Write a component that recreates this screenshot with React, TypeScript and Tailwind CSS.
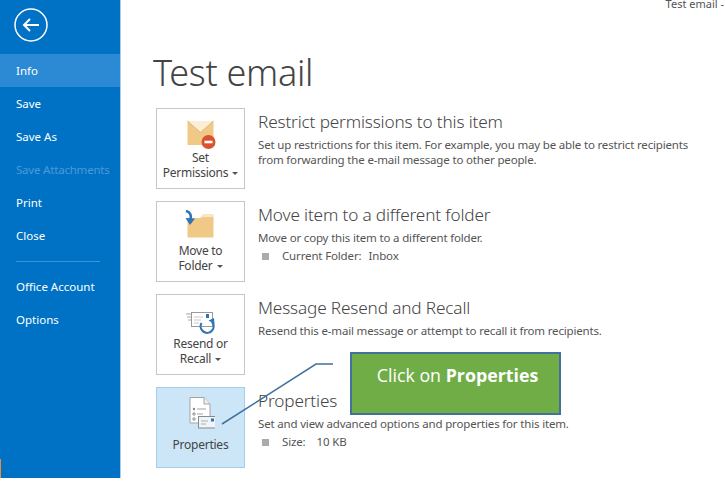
import React from "react";

const font = { fontFamily: '"Noto Sans", "Open Sans", sans-serif' };

function Caret() {
  return <span className="inline-block ml-[4px] mb-[2px] w-0 h-0 border-l-[3px] border-r-[3px] border-t-[3px] border-l-transparent border-r-transparent border-t-[#555]" />;
}

function EnvelopeIcon() {
  return (
    <svg width="32" height="30" viewBox="0 0 32 30">
      <path d="M2.500 2h26v24h-26z" fill="#f0c987" />
      <path d="M2.500 2l13 11.500L28.500 2z" fill="#fbeed6" />
      <path d="M2.500 2l13 11.500L28.500 2" fill="none" stroke="#dcae66" strokeWidth="0.8" />
      <circle cx="23.500" cy="23" r="7" fill="#d9532f" />
      <rect x="19.500" y="21.700" width="8" height="2.600" fill="#fff" />
    </svg>
  );
}

function FolderIcon() {
  return (
    <svg width="32" height="32" viewBox="0 0 32 32">
      <path d="M2.500 8H15L18 4.500H27.500a1 1 0 0 1 1 1V27.500H2.500z" fill="#f0c987" />
      <path d="M15 8L18 4.500H27.500a1 1 0 0 1 1 1V7H18L16 8z" fill="#f9e6c3" />
      <path d="M1 1C5 2 6.500 5 5.500 9" fill="none" stroke="#2f75b5" strokeWidth="2.600" />
      <path d="M0.500 8L10 8.500 5 15z" fill="#2f75b5" />
    </svg>
  );
}

function ResendIcon() {
  return (
    <svg width="30" height="24" viewBox="0 0 30 24">
      <path d="M0 3h5M1 6h4M2 9h3" stroke="#a5a5a5" strokeWidth="1" />
      <rect x="5.500" y="1.500" width="21" height="14" fill="#fff" stroke="#9a9a9a" />
      <path d="M8 6h9M8 9h7M8 12h5" stroke="#c9c9c9" strokeWidth="1" />
      <rect x="20" y="3" width="3" height="4" fill="#2f75b5" />
      <path d="M15.500 12A6.500 6.500 0 1 0 26 11" fill="none" stroke="#2f75b5" strokeWidth="2.200" />
      <path d="M22.500 9.500L28 7l0.500 6z" fill="#2f75b5" />
    </svg>
  );
}

function PropertiesIcon() {
  return (
    <svg width="28" height="32" viewBox="-2 0 28 32">
      <path d="M1 .5h14l6 6.500V26H1z" fill="#fff" stroke="#a3a3a3" />
      <path d="M15 .5V7h6" fill="#f0f0f0" stroke="#a3a3a3" />
      <circle cx="5" cy="12" r="1.200" fill="#8a8a8a" />
      <circle cx="5" cy="17" r="1.200" fill="none" stroke="#8a8a8a" />
      <circle cx="5" cy="22" r="1.200" fill="none" stroke="#8a8a8a" />
      <path d="M8 12h9M8 17h6" stroke="#a3a3a3" />
      <rect x="9.500" y="19.500" width="17" height="11.500" fill="#eef4f9" stroke="#8a8a8a" />
      <path d="M12 24h7M12 27h5" stroke="#b0b0b0" />
      <rect x="22" y="21.500" width="3" height="3" fill="#2f75b5" />
    </svg>
  );
}

const sideItems = ["Save", "Save As"];

function Tile({ icon, lines, caret, active }: { icon: React.ReactNode; lines: string[]; caret?: boolean; active?: boolean }) {
  return (
    <div className={`w-[89px] h-[81px] shrink-0 border flex flex-col items-center ${active ? "bg-[#cde6f7] border-[#a3cfec]" : "bg-white border-[#c6c6c6]"}`}>
      <div className={`${active ? "h-[41px]" : "h-[40px]"} w-full flex items-end justify-center`}>{icon}</div>
      <div className={`${active ? "mt-[8px]" : "mt-[1px]"} text-[12px] leading-[15px] text-[#444] text-center tracking-[-0.25px]`}>
        {lines.map((l, i) => (
          <div key={l}>
            {l}
            {caret && i === lines.length - 1 && <Caret />}
          </div>
        ))}
      </div>
    </div>
  );
}

function Bullet({ label, value, narrow }: { label: string; value: string; narrow?: boolean }) {
  return (
    <div className="flex items-center text-[11.5px] leading-[16px] text-[#555] mt-[3px] tracking-[-0.15px]">
      <span className="w-[7px] h-[7px] bg-[#ababab] ml-[4px] mr-[13px]" />
      <span className={narrow ? "mr-[7px]" : "mr-[11px]"}>{label}</span>
      <span>{value}</span>
    </div>
  );
}

function Section({ tile, title, children }: { tile: React.ReactNode; title: string; children: React.ReactNode }) {
  return (
    <div className="flex h-[81px]">
      {tile}
      <div className="ml-[13px] pt-[2px]">
        <div className="text-[17.2px] leading-[24px] font-light text-[#444] tracking-[-0.15px]">{title}</div>
        <div className="mt-[3px] text-[11.5px] leading-[15px] text-[#555] tracking-[-0.17px]">{children}</div>
      </div>
    </div>
  );
}

export default function App() {
  return (
    <div className="relative w-[725px] h-[482px] overflow-hidden bg-white" style={font}>
      <div className="flex h-[478px]">
        <aside className="relative w-[121px] shrink-0 bg-[#0072c6] border-r border-[#a9cbe8] text-white text-[11.5px]">
          <div className="h-[54px] pl-[14px] pt-[8px]">
            <svg width="34" height="34" viewBox="0 0 34 34" fill="none" stroke="#fff">
              <circle cx="17" cy="17" r="16" strokeWidth="1.500" />
              <path d="M25 17H10M16 11l-6 6 6 6" strokeWidth="2" />
            </svg>
          </div>
          <div className="h-[33px] flex items-center pl-[16px] bg-[#2b8ad3]">Info</div>
          {sideItems.map((s) => (
            <div key={s} className="h-[33px] flex items-center pl-[16px] pt-[1px]">{s}</div>
          ))}
          <div className="h-[33px] flex items-center pl-[16px] pt-[1px] text-[#4a9ad8] tracking-[-0.2px]">Save Attachments</div>
          <div className="h-[33px] flex items-center pl-[16px] pt-[1px]">Print</div>
          <div className="h-[33px] flex items-center pl-[16px] pt-[1px]">Close</div>
          <div className="h-[1px] bg-[#3d94d5] ml-[16px] mr-[20px] mt-[9px] mb-[8px]" />
          <div className="h-[33px] flex items-center pl-[16px]">Office Account</div>
          <div className="h-[33px] flex items-center pl-[16px]">Options</div>
          <div className="absolute left-0 bottom-0 w-[1px] h-[19px] bg-[#f08a3c]" />
        </aside>
        <main className="flex-1 min-w-0 relative pl-[35px]">
          <div className="h-[51px] relative">
            <div className="absolute right-[1px] top-[-4px] text-[11px] leading-[16px] text-[#555] whitespace-nowrap">Test email -</div>
          </div>
          <h1 className="text-[36px] leading-[44px] font-light text-[#444] -ml-[3px] tracking-[-0.3px]">Test email</h1>
          <div className="mt-[13px] flex flex-col gap-[12px]">
            <Section title="Restrict permissions to this item" tile={<Tile icon={<EnvelopeIcon />} lines={["Set", "Permissions"]} caret />}>
              <div>Set up restrictions for this item. For example, you may be able to restrict recipients</div>
              <div>from forwarding the e-mail message to other people.</div>
            </Section>
            <Section title="Move item to a different folder" tile={<Tile icon={<FolderIcon />} lines={["Move to", "Folder"]} caret />}>
              <div>Move or copy this item to a different folder.</div>
              <Bullet narrow label="Current Folder:" value="Inbox" />
            </Section>
            <Section title="Message Resend and Recall" tile={<Tile icon={<ResendIcon />} lines={["Resend or", "Recall"]} caret />}>
              <div>Resend this e-mail message or attempt to recall it from recipients.</div>
            </Section>
            <Section title="Properties" tile={<Tile active icon={<PropertiesIcon />} lines={["Properties"]} />}>
              <div>Set and view advanced options and properties for this item.</div>
              <Bullet label="Size:" value="10 KB" />
            </Section>
          </div>
        </main>
      </div>
      <svg className="absolute left-0 top-0 pointer-events-none" width="725" height="482" fill="none">
        <path d="M222 424L316 364H333" stroke="#41719c" strokeWidth="1.500" />
      </svg>
      <div className="absolute left-[350px] top-[352px] w-[211px] h-[63px] pl-[4px] bg-[#70ad47] border-2 border-[#41719c] text-white text-[17.800px] leading-[42px] text-center" style={{ fontFamily: '"Open Sans", sans-serif' }}>
        Click on <b>Properties</b>
      </div>
    </div>
  );
}
